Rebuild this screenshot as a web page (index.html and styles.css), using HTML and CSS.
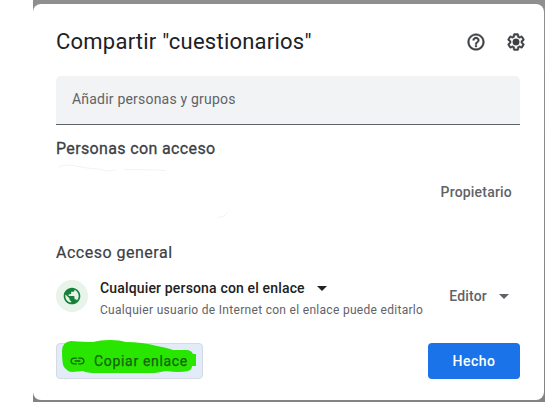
FILE: index.html
```
<!DOCTYPE html>
<html lang="es">
<head>
<meta charset="utf-8">
<title>Compartir</title>
<link rel="stylesheet" href="styles.css">
</head>
<body>
<div class="backdrop">
  <main class="dialog">
    <header class="header">
      <h1 class="title">Compartir "cuestionarios"</h1>
      <svg class="icon" viewBox="0 0 24 24"><path d="M11 18h2v-2h-2v2zm1-16C6.480 2 2 6.480 2 12s4.480 10 10 10 10-4.480 10-10S17.520 2 12 2zm0 18c-4.410 0-8-3.590-8-8s3.590-8 8-8 8 3.590 8 8-3.590 8-8 8zm0-14c-2.210 0-4 1.790-4 4h2c0-1.100.9-2 2-2s2 .9 2 2c0 2-3 1.750-3 5h2c0-2.250 3-2.500 3-5 0-2.210-1.790-4-4-4z"/></svg>
      <svg class="icon" viewBox="0 0 24 24"><path d="M13.850 22.250h-3.700c-.74 0-1.360-.54-1.450-1.270l-.27-1.890c-.27-.14-.53-.29-.79-.46l-1.800.72c-.7.260-1.470-.03-1.810-.65L2.200 15.530c-.35-.66-.2-1.440.36-1.880l1.530-1.190c-.01-.15-.02-.3-.02-.46 0-.15.01-.31.02-.46l-1.520-1.190c-.59-.45-.74-1.260-.37-1.880l1.850-3.190c.34-.62 1.110-.9 1.790-.63l1.810.73c.26-.17.52-.32.78-.46l.27-1.910c.09-.7.710-1.250 1.440-1.250h3.700c.74 0 1.360.54 1.450 1.270l.27 1.890c.27.14.53.29.79.46l1.800-.72c.71-.26 1.480.03 1.820.65l1.840 3.180c.36.66.2 1.440-.36 1.880l-1.520 1.190c.01.15.02.3.02.46s-.01.31-.02.46l1.520 1.190c.56.45.72 1.230.37 1.860l-1.860 3.220c-.34.62-1.110.9-1.800.63l-1.800-.72c-.26.17-.52.32-.78.46l-.27 1.910c-.1.680-.72 1.220-1.460 1.220zm-3.230-2h2.760l.37-2.550.53-.22c.44-.18.880-.44 1.340-.78l.45-.34 2.380.96 1.380-2.400-2.030-1.580.07-.56c.03-.26.060-.51.060-.78s-.03-.53-.06-.78l-.07-.56 2.030-1.580-1.390-2.400-2.390.96-.45-.35c-.42-.32-.87-.58-1.330-.77l-.52-.22-.37-2.550h-2.760l-.37 2.550-.53.210c-.44.190-.88.440-1.340.79l-.45.330-2.380-.95-1.390 2.390 2.030 1.580-.07.560a7 7 0 0 0-.06.790c0 .26.020.53.060.78l.07.560-2.030 1.580 1.380 2.400 2.390-.96.450.35c.43.330.86.580 1.330.77l.53.220z"/><circle cx="12" cy="12" r="3.900"/></svg>
    </header>
    <div class="field">Añadir personas y grupos</div>
    <section class="people">
      <h2 class="heading people-heading">Personas con acceso</h2>
      <div class="person">
        <svg class="marks" viewBox="0 0 184 56"><path d="M2 3L8 1L18 1.500L31 4L42 5L52 7L60 6"/><path d="M68 5.500L86 5.500L110 6.500"/><path d="M162 54L168 52L172 48"/></svg>
        <span class="role">Propietario</span>
      </div>
    </section>
    <section>
      <h2 class="heading general-heading">Acceso general</h2>
      <div class="access">
        <div class="avatar"><svg viewBox="0 0 24 24"><path d="M12 2C6.480 2 2 6.480 2 12s4.480 10 10 10 10-4.480 10-10S17.520 2 12 2zm-1 17.930c-3.950-.49-7-3.850-7-7.930 0-.62.080-1.210.21-1.790L9 15v1c0 1.100.9 2 2 2v1.930zm6.900-2.540c-.26-.81-1-1.390-1.900-1.390h-1v-3c0-.55-.45-1-1-1H8v-2h2c.55 0 1-.45 1-1V7h2c1.100 0 2-.9 2-2v-.41c2.930 1.190 5 4.060 5 7.410 0 2.080-.8 3.970-2.100 5.390z"/></svg></div>
        <div class="details">
          <div class="scope"><span>Cualquier persona con el enlace</span><i class="caret"></i></div>
          <p class="note">Cualquier usuario de Internet con el enlace puede editarlo</p>
        </div>
        <div class="permission"><span>Editor</span><i class="caret"></i></div>
      </div>
    </section>
    <footer class="footer">
      <button class="copy">
        <svg class="marker" viewBox="0 0 147 36"><path d="M6 8Q6-1 15-2Q29-1 37-1Q44-3 54-3Q64-3 70-1Q86-1 101 3Q112 5 117 7H132Q136 8 137 11H140V23H136Q136 27 132 28Q123 30 110 28L99 30H40Q31 30 27 28L16 29Q12 29 8 24Q6 21 6 8Z"/></svg>
        <svg class="link" viewBox="0 0 24 24"><path d="M3.900 12c0-1.710 1.390-3.100 3.100-3.100h4V7H7c-2.760 0-5 2.240-5 5s2.240 5 5 5h4v-1.900H7c-1.710 0-3.100-1.390-3.100-3.100zM8 13h8v-2H8v2zm9-6h-4v1.900h4c1.710 0 3.100 1.390 3.100 3.100s-1.390 3.100-3.100 3.100h-4V17h4c2.760 0 5-2.240 5-5s-2.240-5-5-5z"/></svg>
        <span>Copiar enlace</span>
      </button>
      <button class="done">Hecho</button>
    </footer>
  </main>
</div>
</body>
</html>
```
FILE: styles.css
```
* { box-sizing: border-box; }
body {
  margin: 0;
  padding-left: 33px;
  background: #fff;
  font-family: Roboto, sans-serif;
  overflow: hidden;
}
.backdrop {
  height: 402px;
  padding: 4px 1px 2px 0;
  background: linear-gradient(#8f8f91 0 4px, #858283 100%);
}
.dialog {
  height: 396px;
  padding: 0 24px 0 23px;
  background: #fff;
  border-radius: 8px;
}
.header {
  display: flex;
  align-items: center;
  height: 72px;
  padding: 4px 6px 0 0;
  margin-right: -12px;
  gap: 20px;
}
.title {
  flex: 1;
  margin: 0;
  color: #202124;
  font: 400 22px/28px Roboto, sans-serif;
  letter-spacing: .23px;
}
.icon { width: 20px; height: 20px; fill: #3c4043; stroke: #3c4043; stroke-width: .5; }
.field {
  height: 49px;
  padding: 0 16px;
  border-bottom: 1px solid #5f6368;
  border-radius: 5px 5px 0 0;
  background: #f1f3f4;
  color: #5f6368;
  font-size: 14px;
  line-height: 47px;
  letter-spacing: .2px;
}
.people { height: 116px; padding-top: 12px; }
.heading {
  margin: 0;
  color: #3c4043;
  font-size: 16px;
  font-weight: 400;
  line-height: 24px;
}
.people-heading { letter-spacing: .36px; -webkit-text-stroke: .3px; }
.general-heading { letter-spacing: .5px; -webkit-text-stroke: .2px; }
.person {
  display: flex;
  align-items: center;
  justify-content: space-between;
  height: 62px;
  padding-right: 8px;
}
.marks { width: 184px; height: 56px; fill: none; stroke: #f3f3f3; }
.role, .permission {
  color: #5f6368;
  font-size: 14px;
  font-weight: 500;
  line-height: 20px;
  letter-spacing: .2px;
}
.access { display: flex; height: 78px; padding-top: 10px; }
.avatar {
  display: grid;
  place-items: center;
  width: 32px;
  height: 32px;
  margin-top: 5px;
  border-radius: 50%;
  background: #e6f4ea;
}
.avatar svg { width: 20px; height: 20px; fill: #188038; }
.details { flex: 1; padding: 3px 0 0 12px; }
.scope {
  display: flex;
  align-items: center;
  gap: 12px;
  color: #202124;
  font-size: 14px;
  font-weight: 500;
  line-height: 20px;
  letter-spacing: .16px;
}
.caret {
  border: 5px solid transparent;
  border-top-color: currentColor;
  border-bottom: 0;
}
.note {
  margin: 3px 0 0;
  color: #5f6368;
  font-size: 12px;
  line-height: 18px;
  letter-spacing: .3px;
  white-space: nowrap;
}
.permission {
  display: flex;
  align-items: center;
  gap: 12px;
  height: 20px;
  margin-top: 11px;
  padding-right: 11px;
}
.footer { display: flex; justify-content: space-between; }
button {
  display: flex;
  align-items: center;
  height: 36px;
  padding: 0;
  border-radius: 4px;
  font: 500 14px/20px Roboto, sans-serif;
}
.copy {
  position: relative;
  width: 147px;
  padding-left: 12px;
  gap: 8px;
  border: 1px solid #d5dbe5;
  background: #e2ebf8;
  color: #17630d;
  font-weight: 400;
  letter-spacing: .68px;
  -webkit-text-stroke: .25px;
}
.copy span, .link { position: relative; }
.marker {
  position: absolute;
  left: -1px;
  top: -1px;
  width: 147px;
  height: 36px;
  overflow: visible;
  fill: #28e600;
}
.link { width: 17px; height: 18px; fill: currentColor; }
.done {
  justify-content: center;
  width: 92px;
  border: 0;
  background: #1a73e8;
  color: #fff;
  letter-spacing: .5px;
}
```
